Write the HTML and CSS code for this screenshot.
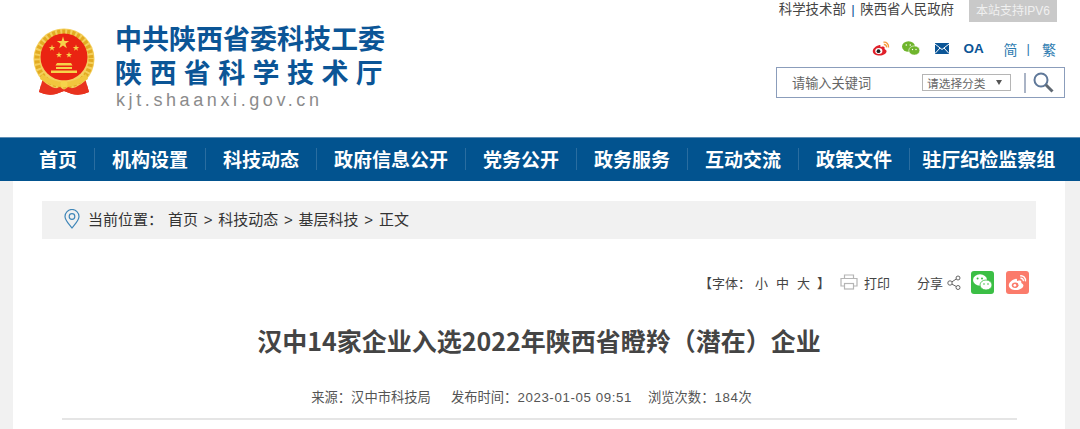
FILE: index.html
```html
<!DOCTYPE html>
<html>
<head>
	<meta charset="UTF-8">
	<title>汉中14家企业入选2022年陕西省瞪羚（潜在）企业</title>
	<link rel="stylesheet" href="styles.css">
</head>
<body>
	<div class="header">
		<div class="logo">
			<svg class="emblem" width="66" height="68" viewBox="0 0 66 68">
				<defs>
					<polygon id="star" points="0,-1 .225,-.309 .951,-.309 .363,.118 .588,.809 0,.382 -.588,.809 -.363,.118 -.951,-.309 -.225,-.309"/>
				</defs>
				<path d="M12 50 L8 64 Q16 68 25 66 L33 63 L41 66 Q50 68 58 64 L54 50 Z" fill="#e8321e"/>
				<circle cx="33" cy="31" r="30.500" fill="#f4cf5c"/>
				<circle cx="33" cy="31" r="27" fill="none" stroke="#e2ab22" stroke-width="5" stroke-dasharray="3 2"/>
				<circle cx="33" cy="29" r="23.500" fill="#ea2412"/>
				<g fill="#f6d34a">
					<use href="#star" transform="translate(32 15) scale(6.500)"/>
					<use href="#star" transform="translate(21 20) scale(3.400)"/>
					<use href="#star" transform="translate(45 20) scale(3.400)"/>
					<use href="#star" transform="translate(28 27) scale(3.200)"/>
					<use href="#star" transform="translate(38 27) scale(3.200)"/>
					<path d="M26 35h14l1.500 2.500h-17zM25 39h16v2H25zM20 42.500h26v2.500H20z"/>
				</g>
				<path d="M11 46 Q33 62 55 46 L57 51 Q33 67 9 51 Z" fill="#f1c63e"/>
				<circle cx="33" cy="56" r="3.500" fill="#f6d34a"/>
				<path d="M10 57 Q20 63 29 59 L33 62 L37 59 Q46 63 56 57 L58 64 Q50 68 41 66 L33 63 L25 66 Q16 68 8 64 Z" fill="#e8321e"/>
			</svg>
			<div class="logo-text">
				<div class="logo-line1">中共陕西省委科技工委</div>
				<div class="logo-line2">陕西省科学技术厅</div>
				<div class="logo-url">kjt.shaanxi.gov.cn</div>
			</div>
		</div>
		<div class="header-right">
			<div class="top-links">
				<span class="top-link">科学技术部</span><span class="top-sep">|</span><span class="top-link">陕西省人民政府</span>
				<span class="ipv6">本站支持IPV6</span>
			</div>
			<div class="top-icons">
				<svg class="icon-weibo" width="18" height="15" viewBox="0 0 18 15">
					<path d="M7.500 4C3.500 5 .5 8 .8 10.500 1.200 13.500 5 15 9 14.500 12.500 14 15 12 14.500 9.800 14.200 8.800 13 8.300 12.500 8 13 6.500 12.500 5.500 11 5.500 10 5.500 9 6 8.500 6 8.800 4.500 8.500 3.800 7.500 4Z" fill="#e0202a"/>
					<ellipse cx="6.800" cy="10" rx="3.600" ry="2.900" fill="#fff"/>
					<circle cx="6.500" cy="10.200" r="1.900" fill="#222"/>
					<path d="M11.500 1.200C14.500 .8 17 3 16.500 6.500M11.800 3.500C13.500 3.300 14.800 4.500 14.500 6.300" fill="none" stroke="#f59a3c" stroke-width="1.400"/>
				</svg>
				<svg class="icon-wechat" width="18" height="15" viewBox="0 0 18 15">
					<ellipse cx="6.500" cy="5.500" rx="6.500" ry="5.200" fill="#6fb52c"/>
					<ellipse cx="12.300" cy="9.500" rx="5.500" ry="4.600" fill="#6fb52c" stroke="#fff" stroke-width=".6"/>
					<circle cx="4.300" cy="4" r=".8" fill="#fff"/>
					<circle cx="8.300" cy="4" r=".8" fill="#fff"/>
					<circle cx="10.500" cy="8.500" r=".7" fill="#fff"/>
					<circle cx="14" cy="8.500" r=".7" fill="#fff"/>
				</svg>
				<svg class="icon-mail" width="14" height="11" viewBox="0 0 14 11">
					<rect width="14" height="11" fill="#0b5596"/>
					<path d="M0 1 7 6.500 14 1M0 10.500 5 5M14 10.500 9 5" fill="none" stroke="#fff" stroke-width="1"/>
				</svg>
				<span class="oa">OA</span>
				<span class="lang">简</span><span class="lang-sep">|</span><span class="lang">繁</span>
			</div>
			<div class="search">
				<span class="search-input">请输入关键词</span>
				<div class="search-select">
					<span>请选择分类</span>
					<i class="select-arrow"></i>
				</div>
				<i class="search-line"></i>
				<svg class="search-btn" width="21" height="21" viewBox="0 0 21 21">
					<circle cx="8" cy="8" r="6.500" fill="none" stroke="#5f7899" stroke-width="2"/>
					<path d="M12.800 12.800 19.500 19.500" stroke="#5f6872" stroke-width="3"/>
				</svg>
			</div>
		</div>
	</div>
	<div class="nav">
		<a class="nav-item">首页</a>
		<a class="nav-item">机构设置</a>
		<a class="nav-item">科技动态</a>
		<a class="nav-item">政府信息公开</a>
		<a class="nav-item">党务公开</a>
		<a class="nav-item">政务服务</a>
		<a class="nav-item">互动交流</a>
		<a class="nav-item">政策文件</a>
		<a class="nav-item nav-last">驻厅纪检监察组</a>
	</div>
	<div class="wrap">
		<div class="crumb">
			<svg class="crumb-pin" width="16" height="20" viewBox="0 0 16 20">
				<path d="M8 19C5 15 1 11.500 1 7.500A7 7 0 0 1 15 7.500C15 11.500 11 15 8 19Z" fill="none" stroke="#3f86b8" stroke-width="1.200"/>
				<circle cx="8" cy="7.500" r="2.800" fill="none" stroke="#3f86b8" stroke-width="1.200"/>
			</svg>
			<span class="crumb-label">当前位置：</span>
			<span class="crumb-path">首页 &gt; 科技动态 &gt; 基层科技 &gt; 正文</span>
		</div>
		<div class="article">
			<div class="tools">
				<span class="font-size">【字体：<b>小</b><b>中</b><b>大</b>】</span>
				<svg class="print-icon" width="18" height="16" viewBox="0 0 18 16">
					<path d="M4.500 4V1h9v3M4.500 12H1V4.500h16V12h-3.500" fill="none" stroke="#b5b5b5" stroke-width="1.200"/>
					<rect x="4.500" y="9.500" width="9" height="5.500" fill="none" stroke="#b5b5b5" stroke-width="1.200"/>
				</svg>
				<span class="print-text">打印</span>
				<span class="share-text">分享</span>
				<svg class="share-icon" width="14" height="15" viewBox="0 0 14 15">
					<circle cx="11" cy="3" r="2" fill="none" stroke="#666" stroke-width="1"/>
					<circle cx="3" cy="8" r="2.200" fill="none" stroke="#666" stroke-width="1"/>
					<circle cx="11" cy="12.500" r="2" fill="none" stroke="#666" stroke-width="1"/>
					<path d="M9.300 4 4.900 6.900M4.900 9.100 9.300 11.500" stroke="#666" stroke-width="1"/>
				</svg>
				<span class="share-btn btn-wechat">
					<svg width="19" height="17" viewBox="0 0 19 17">
						<ellipse cx="7" cy="6" rx="7" ry="5.700" fill="#fff"/>
						<ellipse cx="13" cy="11" rx="6" ry="5" fill="#fff" stroke="#3bbf45" stroke-width=".8"/>
						<circle cx="4.600" cy="4.500" r="1" fill="#3bbf45"/>
						<circle cx="9" cy="4.500" r="1" fill="#3bbf45"/>
						<circle cx="11" cy="10" r=".8" fill="#3bbf45"/>
						<circle cx="15" cy="10" r=".8" fill="#3bbf45"/>
					</svg>
				</span>
				<span class="share-btn btn-weibo">
					<svg width="19" height="17" viewBox="0 0 18 15">
						<path d="M7.500 4C3.500 5 .5 8 .8 10.500 1.200 13.500 5 15 9 14.500 12.500 14 15 12 14.500 9.800 14.200 8.800 13 8.300 12.500 8 13 6.500 12.500 5.500 11 5.500 10 5.500 9 6 8.500 6 8.800 4.500 8.500 3.800 7.500 4Z" fill="#fff"/>
						<ellipse cx="6.800" cy="10" rx="3.200" ry="2.600" fill="#fb7b6b"/>
						<circle cx="6.500" cy="10.200" r="1.300" fill="#fff"/>
						<path d="M11.500 1.200C14.500 .8 17 3 16.500 6.500M11.800 3.500C13.500 3.300 14.800 4.500 14.500 6.300" fill="none" stroke="#fff" stroke-width="1.300"/>
					</svg>
				</span>
			</div>
			<h1 class="title">汉中14家企业入选2022年陕西省瞪羚（潜在）企业</h1>
			<div class="meta">
				<span>来源：汉中市科技局</span>
				<span class="meta-time">发布时间：<i class="num">2023-01-05 09:51</i></span>
				<span>浏览次数：<i class="num">184</i>次</span>
			</div>
		</div>
	</div>
</body>
</html>
```

FILE: styles.css
```css
*{
	margin:0px;padding:0px;box-sizing:border-box;
}
html,body{
	height:429px;overflow:hidden;
}
body{
	background-color:#f1f1f1;
	font-family:"Liberation Sans","Noto Sans CJK SC",sans-serif;
	color:#333333;
}
.header{
	display:flex;justify-content:space-between;height:137px;background-color:#fff;
	padding-right:15px;
}
.logo{
	display:flex;padding:26px 0 0 31px;
}
.emblem{
	margin-top:2px;
}
.logo-text{
	margin-left:19px;color:#0b5596;font-weight:700;
}
.logo-line1,.logo-line2{
	font-size:27px;line-height:34px;height:34px;margin-left:-1px;
}
.logo-line1{
	margin-top:-3px;
}
.logo-line2{
	letter-spacing:7.4px;
}
.logo-url{
	font-weight:400;font-size:18px;line-height:18px;
	color:#8b8b8b;letter-spacing:3.6px;
}
.header-right{
	width:289px;
}
.top-links{
	display:flex;justify-content:flex-end;align-items:flex-start;height:22px;
	margin-right:8px;font-size:13.4px;line-height:20px;color:#444;
}
.top-sep{
	padding:0 5.5px;color:#0b5596;
}
.ipv6{
	width:88px;height:22px;margin-left:15px;background-color:#c9c9c9;color:#f0f0f0;
	font-size:12px;line-height:22px;text-align:center;
}
.top-icons{
	display:flex;align-items:center;height:45px;padding:8px 9px 0 0;justify-content:flex-end;
}
.icon-wechat{
	margin-left:12px;
}
.icon-mail{
	margin-left:15px;
}
.oa{
	width:20px;margin-left:15px;color:#0b5596;font-size:13.5px;font-weight:700;
}
.lang{
	font-size:14px;color:#2d7bb0;
}
.top-icons .lang-sep{
	padding:0 12px 0 9px;color:#2d7bb0;font-size:13px;
}
.top-icons .oa + .lang{
	margin-left:20px;
}
.search{
	display:flex;align-items:center;height:31px;border:1px solid #8b9dbb;
	font-size:13.2px;color:#666;
}
.search-input{
	width:145px;padding-left:15px;
}
.search-select{
	display:flex;align-items:center;justify-content:space-between;width:89px;height:17px;
	border:1px solid #b5b5b5;padding:0 8px 0 4px;font-size:11.7px;
}
.select-arrow{
	width:0;height:0;border:3px solid transparent;border-top:5px solid #555;border-bottom:0;
}
.search-line{
	width:2px;height:20px;margin-left:13px;background-color:#aab4c6;
}
.search-btn{
	margin-left:7px;
}
.nav{
	display:flex;align-items:center;height:44px;padding:0 0 2px 22px;
	background-color:#02538f;border-top:1px solid #5f8fb6;
	font-family:"Noto Sans CJK SC",sans-serif;
}
.nav-item{
	padding:0 17px;border-right:1px solid #2a6da0;
	color:#fff;font-size:19px;font-weight:700;line-height:22px;
}
.nav-last{
	border-right:0;margin-left:-5px;padding-right:0;
}
.wrap{
	height:248px;margin:0 15px 0 13px;padding:20px 29px 0;background-color:#fff;
}
.crumb{
	display:flex;align-items:center;height:38px;padding:0 0 2px 22px;background-color:#f1f1f1;
	font-size:15px;color:#333;
}
.crumb-label{
	width:80px;margin-left:8px;padding-bottom:2px;
}
.crumb-path{
	word-spacing:1.6px;padding-bottom:2px;
}
.article{
	padding:0 20px;
}
.tools{
	display:flex;align-items:center;height:24px;margin:31px -13px 0 0;justify-content:flex-end;
	font-size:13px;color:#444;
}
.font-size b{
	font-weight:400;margin:0 4px;
}
.font-size b:first-child{
	margin-left:4px;
}
.font-size b:last-child{
	margin-right:7px;
}
.print-icon{
	margin-left:10px;
}
.print-text{
	margin-left:6px;
}
.share-text{
	margin-left:27px;
}
.share-icon{
	margin-left:4px;
}
.share-btn{
	display:flex;align-items:center;justify-content:center;width:23px;height:23px;border-radius:3px;
}
.btn-wechat{
	margin-left:10px;background-color:#3bbf45;
}
.btn-weibo{
	margin-left:12px;background-color:#fb7b6b;
}
.title{
	margin-top:28px;height:36px;font-size:25px;line-height:36px;font-weight:700;color:#444;
	text-align:center;font-family:"Noto Sans CJK SC",sans-serif;
}
.meta{
	display:flex;justify-content:center;gap:20px;height:62px;padding:30px 16px 0 0;margin-right:-1px;
	font-size:13.3px;line-height:20px;color:#555;border-bottom:2px solid #e5e5e5;
}
.meta-time{
	margin-right:-4px;
}
.num{
	font-style:normal;letter-spacing:.6px;
}
```
